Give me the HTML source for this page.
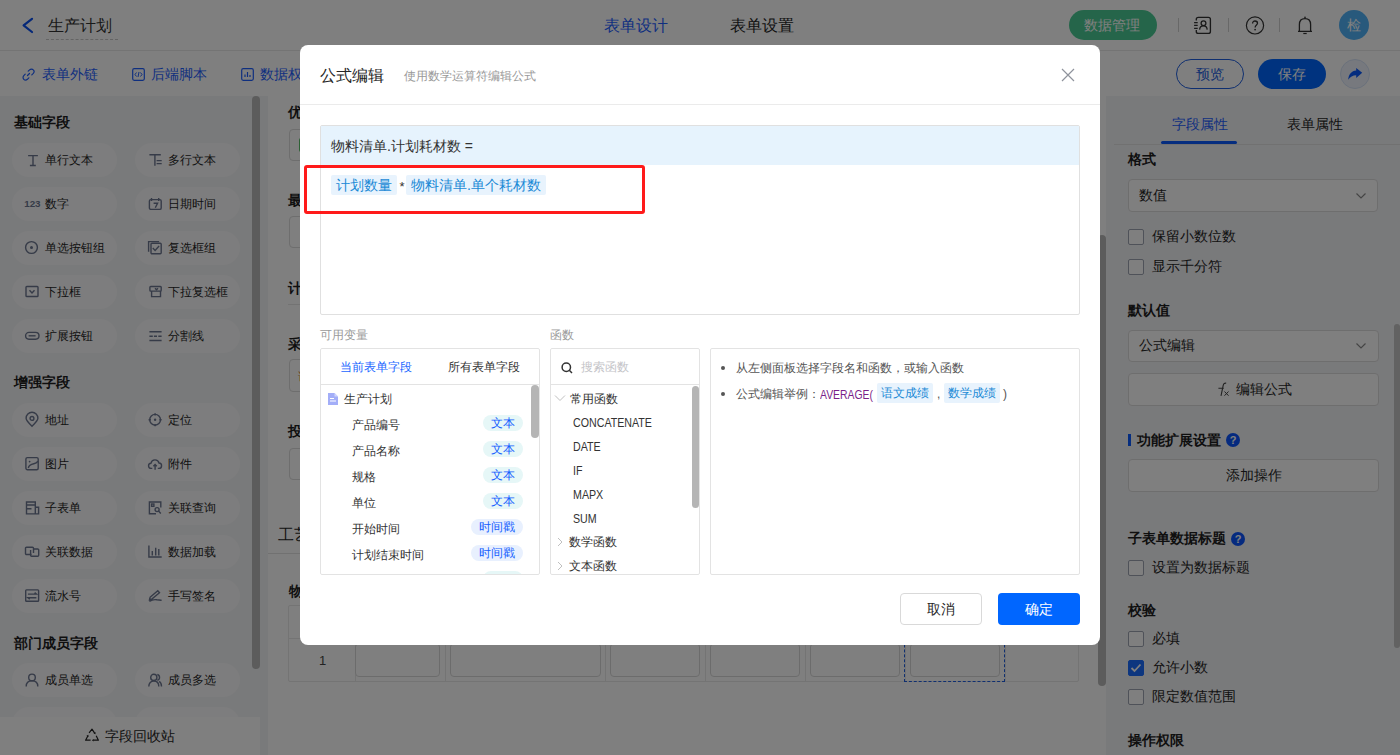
<!DOCTYPE html>
<html><head><meta charset="utf-8">
<style>
*{box-sizing:border-box;margin:0;padding:0}
html,body{width:1400px;height:755px;overflow:hidden;background:#fff;font-family:"Liberation Sans",sans-serif;color:#262626}
.a{position:absolute}
.t{position:absolute;white-space:nowrap;line-height:1}
#hdr{left:0;top:0;width:1400px;height:51px;background:#fff;border-bottom:1px solid #e8e8e8}
#tb{left:0;top:51px;width:1400px;height:45px;background:#fff}
#lp{left:0;top:96px;width:268px;height:659px;background:#f3f4f7}
#cv{left:268px;top:96px;width:832px;height:659px;background:#fff}
#rp{left:1106px;top:96px;width:294px;height:659px;background:#f3f4f7}
.pill{position:absolute;width:105px;height:34px;border-radius:17px;background:#fbfbfc}
.pill .t{left:33px;top:11px;font-size:12px;color:#262626}
.pill svg{position:absolute;left:13px;top:10px}
.h14b{font-size:14px;font-weight:bold;color:#1f1f1f}
.inp{position:absolute;border:1px solid #dcdcdc;border-radius:4px;background:#fff}
.cb{position:absolute;width:16px;height:16px;border:1px solid #9ea4b2;border-radius:2px;background:#fff}
#mask{left:0;top:0;width:1400px;height:755px;background:rgba(0,0,0,0.5)}
#md{left:300px;top:45px;width:800px;height:600px;background:#fff;border-radius:8px}
.tag{position:absolute;height:20px;background:#e8f3fd;border-radius:2px;color:#1b8ad6;font-size:14px;line-height:20px;padding:0 5px;white-space:nowrap}
.vt{position:absolute;height:16px;border-radius:8px;background:#e6f7f7;color:#1560ff;font-size:12px;line-height:16px;text-align:center}
</style></head><body>
<div id="hdr" class="a">
<svg class="a" style="left:21px;top:17px" width="14" height="17" viewBox="0 0 14 17"><path d="M11 1.8 L2.6 8.4 L11 15" fill="none" stroke="#0a50f0" stroke-width="2.2" stroke-linecap="round" stroke-linejoin="round"/></svg>
<div class="t" style="left:48px;top:18.0px;font-size:16px;color:#333;">生产计划</div>
<div class="a" style="left:46px;top:39px;width:72px;border-top:1px dashed #c8c8c8"></div>
<div class="t" style="left:604px;top:18.0px;font-size:16px;color:#1f5fff;">表单设计</div>
<div class="t" style="left:730px;top:18.0px;font-size:16px;color:#262626;">表单设置</div>
<div class="a" style="left:1069px;top:10px;width:88px;height:30px;border-radius:15px;background:#4acb94"></div>
<div class="t" style="left:1084px;top:18.0px;font-size:14px;color:#fff;">数据管理</div>
<div class="a" style="left:1178px;top:18px;width:1px;height:14px;background:#d0d0d0"></div>
<div class="a" style="left:1228px;top:18px;width:1px;height:14px;background:#d0d0d0"></div>
<div class="a" style="left:1279px;top:18px;width:1px;height:14px;background:#d0d0d0"></div>
<svg class="a" style="left:1192px;top:16px" width="20" height="19" viewBox="0 0 20 19"><path d="M4.3 4.6V3.3a2 2 0 0 1 2-2h10.1a2 2 0 0 1 2 2v12.1a2 2 0 0 1-2 2H6.3a2 2 0 0 1-2-2v-1.4" fill="none" stroke="#333" stroke-width="1.35"/><circle cx="11.5" cy="7.3" r="2.4" fill="none" stroke="#333" stroke-width="1.3"/><path d="M7.6 13.6 C7.8 10.8 9.5 9.9 11.4 9.9 C13.3 9.9 15 10.8 15.2 13.6" fill="none" stroke="#333" stroke-width="1.3"/><path d="M2.1 6.6h3.6M2.1 9.3h3.6M2.1 12.3h3.6" stroke="#333" stroke-width="1.2"/></svg>
<svg class="a" style="left:1245px;top:15px" width="20" height="21" viewBox="0 0 20 21"><circle cx="10" cy="10.4" r="8.6" fill="none" stroke="#333" stroke-width="1.2"/><path d="M7.6 8.4 C7.6 6.9 8.6 6 10 6 C11.5 6 12.5 6.9 12.5 8.2 C12.5 9.9 10.1 10 10.1 12.4" fill="none" stroke="#333" stroke-width="1.3"/><circle cx="10.1" cy="14.6" r="0.85" fill="#333"/></svg>
<svg class="a" style="left:1296px;top:15px" width="18" height="21" viewBox="0 0 18 21"><path d="M3.4 16.3 V9.5 C3.4 6 5.6 3.7 9 3.7 C12.4 3.7 14.6 6 14.6 9.5 V16.3 M2 16.4 H16" fill="none" stroke="#333" stroke-width="1.3" stroke-linejoin="round"/><circle cx="9" cy="2.4" r="0.8" fill="#333"/><path d="M7.3 18.5 H10.7" stroke="#333" stroke-width="1.2"/></svg>
<div class="a" style="left:1339px;top:10px;width:30px;height:30px;border-radius:15px;background:#50b2f8"></div>
<div class="t" style="left:1347px;top:18.0px;font-size:14px;color:#fff;">检</div>
</div>
<div id="tb" class="a">
<svg class="a" style="left:22px;top:17px" width="13" height="13" viewBox="0 0 13 13"><path d="M5.5 7.5 L7.5 5.5 M6.2 3.2 L7.6 1.8 C8.6 0.8 10.4 0.8 11.3 1.8 C12.2 2.7 12.2 4.4 11.3 5.4 L9.8 6.9 M6.8 9.8 L5.4 11.3 C4.4 12.2 2.7 12.2 1.8 11.3 C0.8 10.4 0.8 8.6 1.8 7.6 L3.2 6.2" fill="none" stroke="#1f5fff" stroke-width="1.2" stroke-linecap="round"/></svg>
<div class="t" style="left:42px;top:16.0px;font-size:14px;color:#1f5fff;">表单外链</div>
<svg class="a" style="left:132px;top:17px" width="13" height="13" viewBox="0 0 13 13"><rect x="0.7" y="0.7" width="11.6" height="11.6" rx="1.5" fill="none" stroke="#1f5fff" stroke-width="1.2"/><path d="M4.5 4.5 L3 6.5 L4.5 8.5 M8.5 4.5 L10 6.5 L8.5 8.5 M7 4 L6 9" fill="none" stroke="#1f5fff" stroke-width="1"/></svg>
<div class="t" style="left:151px;top:16.0px;font-size:14px;color:#1f5fff;">后端脚本</div>
<svg class="a" style="left:241px;top:17px" width="13" height="13" viewBox="0 0 13 13"><rect x="0.7" y="0.7" width="11.6" height="11.6" rx="1.5" fill="none" stroke="#1f5fff" stroke-width="1.2"/><path d="M4 9 V6.5 M6.5 9 V4 M9 9 V7" stroke="#1f5fff" stroke-width="1.2"/></svg>
<div class="t" style="left:260px;top:16.0px;font-size:14px;color:#1f5fff;">数据权限</div>
<div class="a" style="left:1176px;top:8px;width:68px;height:30px;border-radius:15px;border:1px solid #1f5fe0;background:#fff"></div>
<div class="t" style="left:1196px;top:16.0px;font-size:14px;color:#1f5fe0;">预览</div>
<div class="a" style="left:1258px;top:8px;width:68px;height:30px;border-radius:15px;background:#0066ff"></div>
<div class="t" style="left:1278px;top:16.0px;font-size:14px;color:#fff;">保存</div>
<div class="a" style="left:1340px;top:8px;width:30px;height:30px;border-radius:15px;background:#eef3fc;border:1px solid #d6e2f7"></div>
<svg class="a" style="left:1347px;top:15px" width="17" height="16" viewBox="0 0 17 16"><path d="M9.2 2 L15.2 6.8 L9.2 11.9 V9.3 C5.8 9.3 3.2 10.8 1.2 13.8 C1.6 8.2 4.6 4.7 9.2 4.4 Z" fill="#0a5aff"/></svg>
</div>
<div id="lp" class="a">
<div class="t h14b" style="left:14px;top:19px">基础字段</div>
<div class="pill" style="left:12px;top:47px"><svg width="14" height="14" viewBox="0 0 14 14" overflow="visible"><path d="M3.1 2.6h9.8M8 2.6v9.9M4.9 12.5h5.9" stroke="#6c7690" fill="none" stroke-width="1.4"/></svg><div class="t">单行文本</div></div>
<div class="pill" style="left:135px;top:47px"><svg width="14" height="14" viewBox="0 0 14 14" overflow="visible"><path d="M1.4 1.7h11.4M6.9 1.7v11M8.6 7.6h5.1M8.6 10.6h5.1" stroke="#6c7690" fill="none" stroke-width="1.4"/></svg><div class="t">多行文本</div></div>
<div class="pill" style="left:12px;top:91px"><svg width="14" height="14" viewBox="0 0 14 14" overflow="visible"><text x="-0.8" y="9.9" font-size="9.8" font-weight="bold" fill="#6c7690" font-family="Liberation Sans">123</text></svg><div class="t">数字</div></div>
<div class="pill" style="left:135px;top:91px"><svg width="14" height="14" viewBox="0 0 14 14" overflow="visible"><rect x="1.4" y="2.6" width="11.8" height="9.8" rx="1.5" stroke="#6c7690" fill="none" stroke-width="1.4"/><path d="M3.5 1v3M10.7 1v3M5.6 6.2h4l-2.3 4.5" stroke="#6c7690" fill="none" stroke-width="1.4"/></svg><div class="t">日期时间</div></div>
<div class="pill" style="left:12px;top:135px"><svg width="14" height="14" viewBox="0 0 14 14" overflow="visible"><circle cx="6.5" cy="6.5" r="5.9" stroke="#6c7690" fill="none" stroke-width="1.4"/><circle cx="6.5" cy="6.5" r="1.5" fill="#6c7690"/></svg><div class="t">单选按钮组</div></div>
<div class="pill" style="left:135px;top:135px"><svg width="14" height="14" viewBox="0 0 14 14" overflow="visible"><path d="M0.6 10.7V0.6h10.5" stroke="#6c7690" fill="none" stroke-width="1.4"/><rect x="3" y="2.2" width="10.2" height="10.6" rx="1" stroke="#6c7690" fill="none" stroke-width="1.4"/><path d="M4.8 7l2.3 2.4 4-4.4" stroke="#6c7690" fill="none" stroke-width="1.4"/></svg><div class="t">复选框组</div></div>
<div class="pill" style="left:12px;top:179px"><svg width="14" height="14" viewBox="0 0 14 14" overflow="visible"><rect x="1" y="1.5" width="12" height="10" rx="0.8" stroke="#6c7690" fill="none" stroke-width="1.4"/><path d="M4.5 5.3L7 8l2.5-2.7" stroke="#6c7690" fill="none" stroke-width="1.4"/></svg><div class="t">下拉框</div></div>
<div class="pill" style="left:135px;top:179px"><svg width="14" height="14" viewBox="0 0 14 14" overflow="visible"><rect x="1.9" y="1.5" width="11.3" height="4.6" rx="0.8" stroke="#6c7690" fill="none" stroke-width="1.4"/><path d="M3.6 6.1v5.5h8.9V6.1M7 3.2l1.5 1.5 1.5-1.5" stroke="#6c7690" fill="none" stroke-width="1.4"/></svg><div class="t">下拉复选框</div></div>
<div class="pill" style="left:12px;top:223px"><svg width="14" height="14" viewBox="0 0 14 14" overflow="visible"><rect x="0.6" y="3.4" width="13.4" height="6.8" rx="3.4" stroke="#6c7690" fill="none" stroke-width="1.4"/><path d="M3.6 6.8h7" stroke="#6c7690" fill="none" stroke-width="1.4"/></svg><div class="t">扩展按钮</div></div>
<div class="pill" style="left:135px;top:223px"><svg width="14" height="14" viewBox="0 0 14 14" overflow="visible"><path d="M1.4 2.8h12.2M1.4 11.5h12.2M1.4 7.3h3.4M5.9 7.3h3.1M10.3 7.3h3.3" stroke="#6c7690" fill="none" stroke-width="1.4"/></svg><div class="t">分割线</div></div>
<div class="t h14b" style="left:14px;top:279px">增强字段</div>
<div class="pill" style="left:12px;top:307px"><svg width="14" height="14" viewBox="0 0 14 14" overflow="visible"><path d="M7 13.2C3.5 9.8 1.1 7.4 1.1 5.2a5.9 5.9 0 0 1 11.8 0c0 2.2-2.4 4.6-5.9 8z" stroke="#6c7690" fill="none" stroke-width="1.4"/><circle cx="7" cy="5.4" r="1.9" stroke="#6c7690" fill="none" stroke-width="1.4"/></svg><div class="t">地址</div></div>
<div class="pill" style="left:135px;top:307px"><svg width="14" height="14" viewBox="0 0 14 14" overflow="visible"><circle cx="7.1" cy="6.8" r="5.4" stroke="#6c7690" fill="none" stroke-width="1.4"/><circle cx="7.1" cy="6.8" r="1.2" fill="#6c7690"/><path d="M7.1 0.3v2.2M7.1 11v2.2M0.6 6.8h2.2M11.4 6.8h2.2" stroke="#6c7690" fill="none" stroke-width="1.4"/></svg><div class="t">定位</div></div>
<div class="pill" style="left:12px;top:351px"><svg width="14" height="14" viewBox="0 0 14 14" overflow="visible"><rect x="0.9" y="0.6" width="12.3" height="12.2" rx="1.5" stroke="#6c7690" fill="none" stroke-width="1.4"/><path d="M3.3 11C4 7.8 6.5 7.2 8.8 6.8 10.5 6.5 12 5.6 13 4.3" stroke="#6c7690" fill="none" stroke-width="1.4"/><circle cx="4.6" cy="4.6" r="0.9" fill="#6c7690"/></svg><div class="t">图片</div></div>
<div class="pill" style="left:135px;top:351px"><svg width="14" height="14" viewBox="0 0 14 14" overflow="visible"><path d="M4.3 11.4H3.3A2.6 2.6 0 0 1 3 6.2 4.1 4.1 0 0 1 11 6 2.7 2.7 0 0 1 10.7 11.4H9.8M7.1 12.8V7.6M5.4 9.2l1.7-1.7 1.7 1.7" stroke="#6c7690" fill="none" stroke-width="1.4"/></svg><div class="t">附件</div></div>
<div class="pill" style="left:12px;top:395px"><svg width="14" height="14" viewBox="0 0 14 14" overflow="visible"><path d="M10.3 12.9H1.5V1h8.8v11.9zM1.5 4h8.8M1.5 7.8h5M10.3 6.2h3.3v6.7h-3.3" stroke="#6c7690" fill="none" stroke-width="1.4"/></svg><div class="t">子表单</div></div>
<div class="pill" style="left:135px;top:395px"><svg width="14" height="14" viewBox="0 0 14 14" overflow="visible"><path d="M12.8 6.5V1h-11.4v11.8H8" stroke="#6c7690" fill="none" stroke-width="1.4"/><rect x="3.6" y="3" width="2.3" height="2.3" stroke="#6c7690" fill="none" stroke-width="1.4"/><circle cx="9.1" cy="8.6" r="2" stroke="#6c7690" fill="none" stroke-width="1.4"/><path d="M10.5 10l2.3 2.5" stroke="#6c7690" fill="none" stroke-width="1.4"/></svg><div class="t">关联查询</div></div>
<div class="pill" style="left:12px;top:439px"><svg width="14" height="14" viewBox="0 0 14 14" overflow="visible"><path d="M6.5 9.5H1.5a1 1 0 0 1-1-1V3.3a1 1 0 0 1 1-1h6a1 1 0 0 1 1 1V8" stroke="#6c7690" fill="none" stroke-width="1.4"/><path d="M5.6 5v5.3a1 1 0 0 0 1 1h6.1a1 1 0 0 0 1-1V5a1 1 0 0 0-1-1H8.5" stroke="#6c7690" fill="none" stroke-width="1.4"/></svg><div class="t">关联数据</div></div>
<div class="pill" style="left:135px;top:439px"><svg width="14" height="14" viewBox="0 0 14 14" overflow="visible"><path d="M0.9 0.6V12h12.8M4.3 6.1v4.3M7.7 2.7v7.7M10.8 4v6.4" stroke="#6c7690" fill="none" stroke-width="1.4"/></svg><div class="t">数据加载</div></div>
<div class="pill" style="left:12px;top:483px"><svg width="14" height="14" viewBox="0 0 14 14" overflow="visible"><rect x="0.7" y="0.9" width="12.9" height="11.4" rx="0.8" stroke="#6c7690" fill="none" stroke-width="1.4"/><path d="M2.9 5.1h8.5L9.6 3.6M11.4 8.7H2.9l1.8 1.5" stroke="#6c7690" fill="none" stroke-width="1.4"/></svg><div class="t">流水号</div></div>
<div class="pill" style="left:135px;top:483px"><svg width="14" height="14" viewBox="0 0 14 14" overflow="visible"><path d="M1.4 12.3c2-1.2 5-2 7.5-1.5 1.7.3 3 .5 4.7.4M2.1 8.3l7.7-6.5 1.7 1.9-7.7 6.4-2.3.6z" stroke="#6c7690" fill="none" stroke-width="1.4"/></svg><div class="t">手写签名</div></div>
<div class="t h14b" style="left:14px;top:540px">部门成员字段</div>
<div class="pill" style="left:12px;top:567px"><svg width="14" height="14" viewBox="0 0 14 14" overflow="visible"><circle cx="7" cy="4.4" r="3.3" stroke="#6c7690" fill="none" stroke-width="1.4"/><path d="M1.2 13.6c0-3.6 2.4-5.8 5.8-5.8s5.8 2.2 5.8 5.8" stroke="#6c7690" fill="none" stroke-width="1.4"/></svg><div class="t">成员单选</div></div>
<div class="pill" style="left:135px;top:567px"><svg width="14" height="14" viewBox="0 0 14 14" overflow="visible"><circle cx="5.8" cy="4.4" r="3.1" stroke="#6c7690" fill="none" stroke-width="1.4"/><path d="M0.8 13.4c0-3.3 2.1-5.4 5-5.4s5 2.1 5 5.4M9.3 1.5a3 3 0 0 1 0 5.8M11.2 8.4c1.5.9 2.3 2.6 2.3 5" stroke="#6c7690" fill="none" stroke-width="1.4"/></svg><div class="t">成员多选</div></div>
<div class="pill" style="left:12px;top:611px"><svg width="14" height="14" viewBox="0 0 14 14" overflow="visible"><circle cx="7" cy="4.4" r="3.3" stroke="#6c7690" fill="none" stroke-width="1.4"/><path d="M1.2 13.6c0-3.6 2.4-5.8 5.8-5.8s5.8 2.2 5.8 5.8" stroke="#6c7690" fill="none" stroke-width="1.4"/></svg><div class="t">部门单选</div></div>
<div class="pill" style="left:135px;top:611px"><svg width="14" height="14" viewBox="0 0 14 14" overflow="visible"><circle cx="5.8" cy="4.4" r="3.1" stroke="#6c7690" fill="none" stroke-width="1.4"/><path d="M0.8 13.4c0-3.3 2.1-5.4 5-5.4s5 2.1 5 5.4M9.3 1.5a3 3 0 0 1 0 5.8M11.2 8.4c1.5.9 2.3 2.6 2.3 5" stroke="#6c7690" fill="none" stroke-width="1.4"/></svg><div class="t">部门多选</div></div>
<div class="a" style="left:252px;top:0;width:8px;height:573px;border-radius:4px;background:#b9b9b9"></div>
<div class="a" style="left:0;top:621px;width:260px;height:38px;background:#fefefe"></div>
<svg class="a" style="left:84px;top:631px" width="16" height="16" viewBox="0 0 16 16"><path d="M5.1 5.8L8 2.2 10.6 6.1M12.2 8.7L14.4 13.2H9.2M6.6 13.2H1.6L3.8 9" fill="none" stroke="#222" stroke-width="1.2" stroke-linejoin="round"/><path d="M11.46 5.08L9.54 6.52 11.58 7.24zM9.6 12L9.6 14.4 7.9 13.2zM4.53 9.9L2.47 8.7 4.4 7.75z" fill="#222"/></svg>
<div class="t" style="left:105px;top:633px;font-size:14px;color:#262626">字段回收站</div>
</div>
<div id="cv" class="a">
<div class="t" style="left:20px;top:9.0px;font-size:14px;color:#1f1f1f;font-weight:bold;">优先级</div>
<div class="inp" style="left:21px;top:33px;width:790px;height:32px"></div>
<div class="a" style="left:31px;top:42px;width:31px;height:14px;border-radius:2px;background:#5ac26a"></div>
<div class="t" style="left:20px;top:97.0px;font-size:14px;color:#1f1f1f;font-weight:bold;">最早开始时间</div>
<div class="inp" style="left:21px;top:120px;width:790px;height:32px"></div>
<div class="t" style="left:20px;top:185.0px;font-size:14px;color:#1f1f1f;font-weight:bold;">计划信息</div>
<div class="a" style="left:20px;top:208px;width:790px;height:1px;background:#e6e6e6"></div>
<div class="t" style="left:20px;top:241.0px;font-size:14px;color:#1f1f1f;font-weight:bold;">采购数量</div>
<div class="inp" style="left:21px;top:263px;width:790px;height:33px"></div>
<div class="t" style="left:30px;top:275.0px;font-size:12px;color:#d48a3a;">请输入</div>
<div class="t" style="left:20px;top:328.0px;font-size:14px;color:#1f1f1f;font-weight:bold;">投产数量</div>
<div class="inp" style="left:21px;top:352px;width:790px;height:32px"></div>
<div class="t" style="left:10px;top:431.0px;font-size:16px;color:#262626;">工艺路线</div>
<div class="a" style="left:0px;top:457px;width:832px;height:1px;background:#e3e3e3"></div>
<div class="t" style="left:21px;top:488.0px;font-size:14px;color:#1f1f1f;font-weight:bold;">物料清单</div>
<div class="a" style="left:20px;top:509px;width:791px;height:77px;border:1px solid #e8e8e8;border-radius:2px"></div>
<div class="a" style="left:20px;top:542px;width:790px;height:1px;background:#e8e8e8"></div>
<div class="a" style="left:87px;top:509px;width:1px;height:77px;background:#e8e8e8"></div>
<div class="a" style="left:177px;top:509px;width:1px;height:77px;background:#e8e8e8"></div>
<div class="a" style="left:337px;top:509px;width:1px;height:77px;background:#e8e8e8"></div>
<div class="a" style="left:437px;top:509px;width:1px;height:77px;background:#e8e8e8"></div>
<div class="a" style="left:537px;top:509px;width:1px;height:77px;background:#e8e8e8"></div>
<div class="a" style="left:637px;top:509px;width:1px;height:77px;background:#e8e8e8"></div>
<div class="a" style="left:737px;top:509px;width:1px;height:77px;background:#e8e8e8"></div>
<div class="t" style="left:51px;top:557.5px;font-size:13px;color:#444;">1</div>
<div class="inp" style="left:87px;top:547px;width:85px;height:34px;border-color:#d9d9d9"></div>
<div class="inp" style="left:182px;top:547px;width:151px;height:34px;border-color:#d9d9d9"></div>
<div class="inp" style="left:342px;top:547px;width:90px;height:34px;border-color:#d9d9d9"></div>
<div class="inp" style="left:442px;top:547px;width:90px;height:34px;border-color:#d9d9d9"></div>
<div class="inp" style="left:542px;top:547px;width:90px;height:34px;border-color:#d9d9d9"></div>
<div class="inp" style="left:642px;top:547px;width:90px;height:34px;border-color:#d9d9d9"></div>
<div class="a" style="left:636px;top:514px;width:101px;height:72px;border:1px dashed #1f5fe0"></div>
<div class="a" style="left:830px;top:139px;width:8px;height:451px;border-radius:4px;background:#b8b8b8"></div>
</div>
<div id="rp" class="a">
<div class="t" style="left:66px;top:20.5px;font-size:14px;color:#1f5fff;">字段属性</div>
<div class="t" style="left:181px;top:20.5px;font-size:14px;color:#262626;">表单属性</div>
<div class="a" style="left:8px;top:48px;width:286px;height:1px;background:#e2e2e2"></div>
<div class="a" style="left:55px;top:45px;width:76px;height:3px;background:#0a5aff;border-radius:2px"></div>
<div class="t" style="left:22px;top:56.0px;font-size:14px;color:#1f1f1f;font-weight:bold;">格式</div>
<div class="inp" style="left:22px;top:83px;width:250px;height:33px"></div><div class="t" style="left:33px;top:91.5px;font-size:14px;color:#262626;">数值</div><svg class="a" style="left:249px;top:95.5px" width="12" height="8" viewBox="0 0 12 8"><path d="M1.5 1.5L6 6l4.5-4.5" fill="none" stroke="#8a8a8a" stroke-width="1.2"/></svg>
<div class="cb" style="left:22px;top:133px"></div><div class="t" style="left:46px;top:133.0px;font-size:14px;color:#262626;">保留小数位数</div>
<div class="cb" style="left:22px;top:163px"></div><div class="t" style="left:46px;top:163.0px;font-size:14px;color:#262626;">显示千分符</div>
<div class="t" style="left:22px;top:207.0px;font-size:14px;color:#1f1f1f;font-weight:bold;">默认值</div>
<div class="inp" style="left:22px;top:234px;width:251px;height:32px"></div><div class="t" style="left:33px;top:242.0px;font-size:14px;color:#262626;">公式编辑</div><svg class="a" style="left:249px;top:246.0px" width="12" height="8" viewBox="0 0 12 8"><path d="M1.5 1.5L6 6l4.5-4.5" fill="none" stroke="#8a8a8a" stroke-width="1.2"/></svg>
<div class="inp" style="left:22px;top:277px;width:251px;height:33px"></div>
<svg class="a" style="left:111px;top:286px" width="14" height="15" viewBox="0 0 14 15"><path d="M9.2 1.2C7.6 0.8 6.6 1.6 6.2 3.4L4 13.8M1.4 6.3h5.4" fill="none" stroke="#444" stroke-width="1.1"/><path d="M7.5 9.5l4 4.2M11.5 9.5l-4 4.2" stroke="#444" stroke-width="1"/></svg>
<div class="t" style="left:130px;top:286.0px;font-size:14px;color:#262626;">编辑公式</div>
<div class="a" style="left:22px;top:338px;width:3px;height:12px;background:#0a5aff"></div>
<div class="t" style="left:31px;top:337.0px;font-size:14px;color:#1f1f1f;font-weight:bold;">功能扩展设置</div>
<div class="a" style="left:120px;top:336.5px;width:14px;height:14px;border-radius:50%;background:#0a55ff;color:#fff;font-size:11px;font-weight:bold;line-height:14px;text-align:center">?</div>
<div class="inp" style="left:22px;top:363px;width:251px;height:33px"></div>
<div class="t" style="left:120px;top:372.0px;font-size:14px;color:#262626;">添加操作</div>
<div class="t" style="left:22px;top:435.0px;font-size:14px;color:#1f1f1f;font-weight:bold;">子表单数据标题</div>
<div class="a" style="left:125px;top:435.5px;width:14px;height:14px;border-radius:50%;background:#0a55ff;color:#fff;font-size:11px;font-weight:bold;line-height:14px;text-align:center">?</div>
<div class="cb" style="left:22px;top:464px"></div><div class="t" style="left:46px;top:464.0px;font-size:14px;color:#262626;">设置为数据标题</div>
<div class="t" style="left:22px;top:506.5px;font-size:14px;color:#1f1f1f;font-weight:bold;">校验</div>
<div class="cb" style="left:22px;top:534.5px"></div><div class="t" style="left:46px;top:534.5px;font-size:14px;color:#262626;">必填</div>
<div class="cb" style="left:22px;top:564px;background:#1a6cff;border-color:#1a6cff"></div><svg class="a" style="left:22px;top:564px" width="16" height="16" viewBox="0 0 16 16"><path d="M3.5 8l3 3 6-6.5" fill="none" stroke="#fff" stroke-width="1.8"/></svg><div class="t" style="left:46px;top:564.0px;font-size:14px;color:#262626;">允许小数</div>
<div class="cb" style="left:22px;top:593px"></div><div class="t" style="left:46px;top:593.0px;font-size:14px;color:#262626;">限定数值范围</div>
<div class="t" style="left:22px;top:636.5px;font-size:14px;color:#1f1f1f;font-weight:bold;">操作权限</div>
<div class="a" style="left:288px;top:228px;width:6px;height:324px;border-radius:3px;background:#c4c4c4"></div>
</div>
<div id="mask" class="a"></div>
<div id="md" class="a">
<div class="t" style="left:20px;top:23.0px;font-size:16px;color:#262626;">公式编辑</div>
<div class="t" style="left:104px;top:25.0px;font-size:12px;color:#999;">使用数学运算符编辑公式</div>
<svg class="a" style="left:760.5px;top:23px" width="14" height="14" viewBox="0 0 14 14"><path d="M1 1L13 13M13 1L1 13" stroke="#8f939c" stroke-width="1.2"/></svg>
<div class="a" style="left:0px;top:59px;width:800px;height:1px;background:#ebebeb"></div>
<div class="a" style="left:20px;top:80px;width:760px;height:190px;border:1px solid #e0e0e0;border-radius:2px"></div>
<div class="a" style="left:21px;top:81px;width:758px;height:39px;background:#e6f3fd"></div>
<div class="t" style="left:31px;top:94.0px;font-size:14px;color:#333;">物料清单.计划耗材数 =</div>
<div class="tag" style="left:31px;top:130px">计划数量</div>
<div class="t" style="left:99.5px;top:134.5px;font-size:13px;color:#333;">*</div>
<div class="tag" style="left:106px;top:130px">物料清单.单个耗材数</div>
<div class="a" style="left:4px;top:120px;width:341px;height:49px;border:3px solid #ff1a1a;border-radius:3px"></div>
<div class="t" style="left:20px;top:284.0px;font-size:12px;color:#9a9a9a;">可用变量</div>
<div class="t" style="left:250px;top:284.0px;font-size:12px;color:#9a9a9a;">函数</div>
<div class="a" style="left:20px;top:303px;width:220px;height:227px;overflow:hidden">
<div class="t" style="left:20px;top:13.0px;font-size:12px;color:#1a66ff;">当前表单字段</div>
<div class="t" style="left:128px;top:13.0px;font-size:12px;color:#333;">所有表单字段</div>
<div class="a" style="left:0px;top:36px;width:220px;height:1px;background:#e3e3e3"></div>
<svg class="a" style="left:8px;top:45px" width="10" height="12" viewBox="0 0 10 12"><path d="M0 0h6.5L10 3.5V12H0z" fill="#a3aef8"/><path d="M2 5.5h4M2 8h6" stroke="#fff" stroke-width="1.2"/><path d="M6.5 0v3.5H10" fill="#d0d6fc"/></svg>
<div class="t" style="left:24px;top:45.0px;font-size:12px;color:#333;">生产计划</div>
<div class="t" style="left:32px;top:71.0px;font-size:12px;color:#333;">产品编号</div>
<div class="vt" style="left:163px;top:66.5px;width:40px">文本</div>
<div class="t" style="left:32px;top:97.0px;font-size:12px;color:#333;">产品名称</div>
<div class="vt" style="left:163px;top:92.5px;width:40px">文本</div>
<div class="t" style="left:32px;top:123.0px;font-size:12px;color:#333;">规格</div>
<div class="vt" style="left:163px;top:118.5px;width:40px">文本</div>
<div class="t" style="left:32px;top:149.0px;font-size:12px;color:#333;">单位</div>
<div class="vt" style="left:163px;top:144.5px;width:40px">文本</div>
<div class="t" style="left:32px;top:175.0px;font-size:12px;color:#333;">开始时间</div>
<div class="vt" style="left:151px;top:170.5px;width:52px;background:#e8f0fe">时间戳</div>
<div class="t" style="left:32px;top:201.0px;font-size:12px;color:#333;">计划结束时间</div>
<div class="vt" style="left:151px;top:196.5px;width:52px;background:#e8f0fe">时间戳</div>
<div class="vt" style="left:163px;top:222.5px;width:40px"></div>
<div class="a" style="left:211px;top:37px;width:8px;height:53px;background:#b5b5b5;border-radius:4px"></div>
<div class="a" style="left:0;top:0;width:220px;height:227px;border:1px solid #e3e3e3;border-radius:2px"></div>
</div>
<div class="a" style="left:250px;top:303px;width:150px;height:227px;overflow:hidden">
<svg class="a" style="left:11px;top:14px" width="12" height="12" viewBox="0 0 12 12"><circle cx="5.3" cy="5.3" r="4.2" fill="none" stroke="#333" stroke-width="1.5"/><path d="M8.3 8.3L11 11" stroke="#333" stroke-width="1.5"/></svg>
<div class="t" style="left:31px;top:13.0px;font-size:12px;color:#c4c4c8;">搜索函数</div>
<div class="a" style="left:0px;top:36px;width:150px;height:1px;background:#e3e3e3"></div>
<svg class="a" style="left:4px;top:46px" width="12" height="8" viewBox="0 0 12 8"><path d="M1 1.5L6 6.5 11 1.5" fill="none" stroke="#c0c0c0" stroke-width="1"/></svg>
<div class="t" style="left:20px;top:44.5px;font-size:12px;color:#333;">常用函数</div>
<div class="t" style="left:23px;top:68.0px;font-size:13px;color:#333;transform:scaleX(0.82);transform-origin:0 0;">CONCATENATE</div>
<div class="t" style="left:23px;top:92.0px;font-size:13px;color:#333;transform:scaleX(0.82);transform-origin:0 0;">DATE</div>
<div class="t" style="left:23px;top:116.0px;font-size:13px;color:#333;transform:scaleX(0.82);transform-origin:0 0;">IF</div>
<div class="t" style="left:23px;top:140.0px;font-size:13px;color:#333;transform:scaleX(0.82);transform-origin:0 0;">MAPX</div>
<div class="t" style="left:23px;top:164.0px;font-size:13px;color:#333;transform:scaleX(0.82);transform-origin:0 0;">SUM</div>
<svg class="a" style="left:7px;top:189px" width="6" height="10" viewBox="0 0 6 10"><path d="M1 1L5 5 1 9" fill="none" stroke="#c0c0c0" stroke-width="1"/></svg>
<div class="t" style="left:19px;top:188.0px;font-size:12px;color:#333;">数学函数</div>
<svg class="a" style="left:7px;top:213px" width="6" height="10" viewBox="0 0 6 10"><path d="M1 1L5 5 1 9" fill="none" stroke="#c0c0c0" stroke-width="1"/></svg>
<div class="t" style="left:19px;top:212.0px;font-size:12px;color:#333;">文本函数</div>
<div class="a" style="left:142px;top:38px;width:7px;height:122px;background:#b5b5b5;border-radius:4px"></div>
<div class="a" style="left:0;top:0;width:150px;height:227px;border:1px solid #e3e3e3;border-radius:2px"></div>
</div>
<div class="a" style="left:410px;top:303px;width:370px;height:227px;border:1px solid #e3e3e3;border-radius:2px"></div>
<div class="a" style="left:421px;top:321px;width:4px;height:4px;background:#555;border-radius:50%"></div>
<div class="a" style="left:421px;top:347px;width:4px;height:4px;background:#555;border-radius:50%"></div>
<div class="t" style="left:436px;top:317.0px;font-size:12px;color:#555;">从左侧面板选择字段名和函数，或输入函数</div>
<div class="t" style="left:436px;top:343.0px;font-size:12px;color:#555;">公式编辑举例：</div>
<div class="t" style="left:520px;top:342.5px;font-size:13px;color:#7a1f8a;transform:scaleX(0.8);transform-origin:0 0;">AVERAGE(</div>
<div class="tag" style="left:577px;top:338px;width:56px;font-size:12px;padding:0 4px">语文成绩</div>
<div class="t" style="left:637px;top:343.0px;font-size:12px;color:#555;">,</div>
<div class="tag" style="left:644px;top:338px;width:56px;font-size:12px;padding:0 4px">数学成绩</div>
<div class="t" style="left:703px;top:343.0px;font-size:12px;color:#555;">)</div>
<div class="a" style="left:600px;top:548px;width:82px;height:32px;border:1px solid #d9d9d9;border-radius:4px;background:#fff"></div>
<div class="t" style="left:627px;top:557.0px;font-size:14px;color:#262626;">取消</div>
<div class="a" style="left:698px;top:548px;width:82px;height:32px;border-radius:4px;background:#0066ff"></div>
<div class="t" style="left:725px;top:557.0px;font-size:14px;color:#fff;">确定</div>
</div>
</body></html>
